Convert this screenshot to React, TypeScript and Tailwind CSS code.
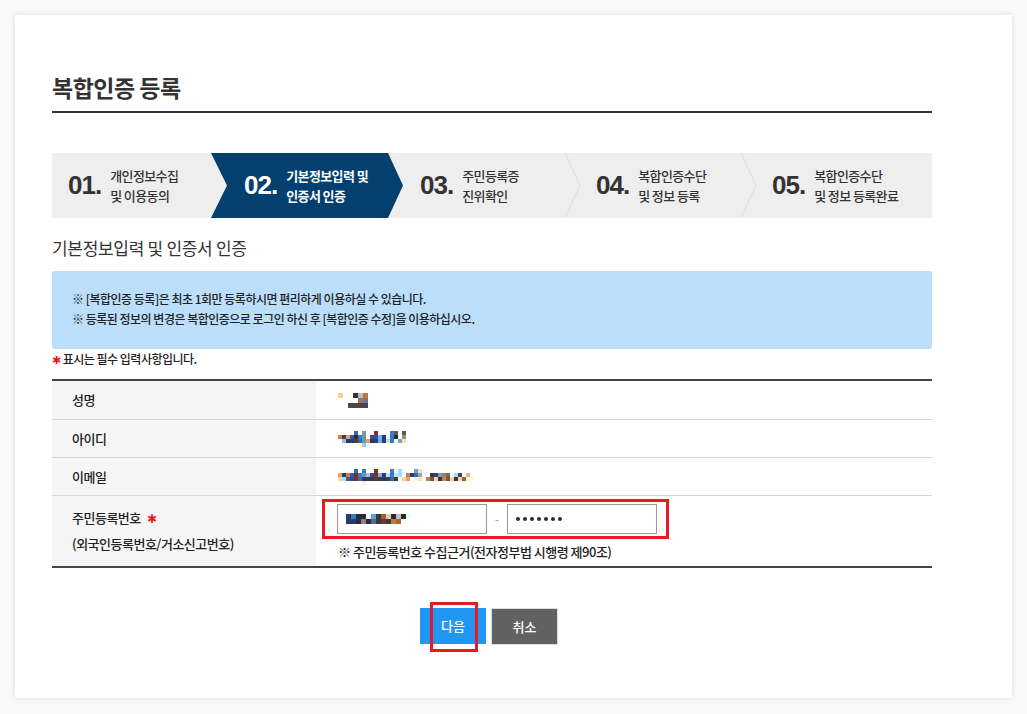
import type { ReactNode } from 'react';

const FONT = '"Noto Sans CJK KR", "Noto Sans", sans-serif';

const steps = [
  { no: '01.', l1: '개인정보수집', l2: '및 이용동의' },
  { no: '02.', l1: '기본정보입력 및', l2: '인증서 인증' },
  { no: '03.', l1: '주민등록증', l2: '진위확인' },
  { no: '04.', l1: '복합인증수단', l2: '및 정보 등록' },
  { no: '05.', l1: '복합인증수단', l2: '및 정보 등록완료' },
];

// pixelated (masked) values
function Mosaic({ cells, size = 5 }: { cells: string[][]; size?: number }) {
  const w = Math.max(...cells.map((r) => r.length)) * size;
  const h = cells.length * size;
  return (
    <svg width={w} height={h} className="block">
      {cells.map((row, y) =>
        row.map((c, x) =>
          c ? <rect key={`${x}-${y}`} x={x * size} y={y * size} width={size} height={size} fill={c} /> : null,
        ),
      )}
    </svg>
  );
}

const nameCells = [
  ['#ffd08a', '', '', '#333', '#bbb', '#c07a30'],
  ['', '', '', '', '#8a7a70', '#6a7a8a'],
  ['', '', '#4a4a4a', '#4a4a4a', '#6a3a30', '#3a4a6a'],
];
const idCells = [
  ['', '', '', '', '#3a6aaa', '', '#7a9a9a', '', '', '#7a3030', '', '', '', '#3a7ac0', '#5a5a5a', '', '#5a5a5a'],
  ['#c08050', '#6a3040', '#e0a070', '#3a5aa0', '#2a2a3a', '#3a7ac0', '#6a9a9a', '', '#3a4a8a', '#3a4a8a', '#7ab0e0', '#2a3a7a', '', '#3a7ac0', '#2a2a2a', '', '#a09070'],
  ['', '#8ac0f0', '#2a3a6a', '#2a3a6a', '#5a3a3a', '#2a6ab0', '#6a9ab0', '#e0a070', '#2a3a5a', '#2a3a7a', '#6ab0e0', '#2a3a7a', '#c0e0f0', '#3a7ac0', '', '#6ab0b0', '#ffe0b0'],
  ['', '', '', '', '', '#fffbd0', '#8ad0f0', '', '', '', '', '', '', '', '', '', ''],
];
const mailCells = [
  ['', '', '', '', '#3a6aaa', '', '#3a7ac0', '', '', '#7a3030', '', '', '', '#3a7ac0', '', '#a0e0ff', '', '', '', '#7a9ac0', '#ffe0c0', '', '', '', '', '', '', '', '', '', '', '', '', ''],
  ['#e0a070', '#2a3a6a', '#c08050', '#3a5aa0', '#7a3030', '#3a7ac0', '#6a9ab0', '#a0c0e0', '#3a4a8a', '#7a3030', '#7ab0e0', '#2a3a7a', '#c0e0f0', '#3a7ac0', '#c0e0ff', '#a0e0ff', '', '#c08050', '#2a3a6a', '#3a6aaa', '#8ab0a0', '', '', '#3a3a3a', '#3a3a8a', '#7aa0b0', '#a08060', '#6a6a6a', '', '#a0e0ff', '#3a4a6a', '', '#c0c080', ''],
  ['#ffd0a0', '#a0e0ff', '#3a5aa0', '#3a4a8a', '#7a3030', '#3a6aaa', '#2a3a5a', '#3a3a3a', '#2a3a5a', '#5a3a3a', '#3a3a3a', '#2a3a5a', '#3a3a5a', '#3a6aaa', '#3a3a3a', '#fffbd0', '#ffd0a0', '#e0a070', '#fff', '#f0f0f0', '#ffe0c0', '', '#c08050', '#6a5a4a', '#ffd0a0', '#3a3a3a', '#c08050', '#7a5a3a', '#ffd0a0', '#3a3a3a', '#ffd0a0', '#a06040', '#fffbd0', '#fffbd0'],
  ['', '', '', '', '', '', '#ffefd0', '', '', '', '', '', '', '', '', '', '', '', '', '', '', '', '', '', '', '', '', '', '', '', '', '', '', ''],
];
const rrnCells = [
  ['#2a3a6a', '#3a7ac0', '#2a2a3a', '#2a2a3a', '', '#5aa0e0', '#3a3a3a', '#a06030', '#e0d0b0', '#2a2a2a', '#c0c0c0', '#2a2a2a', '#f0fff8'],
  ['#2a3a6a', '#2a3a6a', '#2a2a3a', '#9a7a8a', '#2a2a3a', '#5a6a7a', '#3a3a3a', '#6a3a3a', '#3a3a3a', '#c07a40', '#a06a30', '', ''],
];

function Row({ label, children, tall }: { label: ReactNode; children: ReactNode; tall?: boolean }) {
  return (
    <div className={`flex border-t border-[#d5d5d5] first:border-t-0 ${tall ? 'min-h-[71px]' : 'h-[38px]'}`}>
      <div className="flex w-[264px] shrink-0 items-center bg-[#f5f5f5] pl-5 text-[13px] font-medium tracking-[-0.5px] text-[#222]">
        {label}
      </div>
      <div className="flex flex-1 items-center pl-[22px]">{children}</div>
    </div>
  );
}

export default function App() {
  return (
    <div className="min-h-[714px] bg-[#fafafa] p-[15px]" style={{ fontFamily: FONT }}>
      <div className="h-[683px] w-[997px] bg-white pl-[37px] pt-[57px] shadow-[0_0_6px_rgba(0,0,0,0.12)]">
        <div className="w-[880px]">
          <h1 className="text-[23px] font-bold leading-[30px] tracking-[-0.5px] text-[#333]">복합인증 등록</h1>
          <div className="mt-[9px] h-[2px] bg-[#333]" />

          {/* steps */}
          <div className="mt-[40px] flex h-[65px] bg-[#eeeeee]">
            {steps.map((s, i) => {
              const active = i === 1;
              return (
                <div key={s.no} className="relative flex w-[176px] items-center pl-4">
                  {active && (
                    <svg className="absolute top-0 -left-[17px] h-[65px] w-[193px]" viewBox="0 0 193 65">
                      <polygon points="0,0 177,0 192,32.5 177,65 0,65 16,32.5" fill="#03406f" />
                    </svg>
                  )}
                  {(i === 3 || i === 4) && (
                    <svg className="absolute top-0 -left-[16px] h-[65px] w-[17px]" viewBox="0 0 17 65">
                      <polyline points="1,0 16,32.5 1,65" fill="none" stroke="#dcdcdc" strokeWidth="1" />
                    </svg>
                  )}
                  <span
                    className={`relative text-[26px] font-bold tracking-[-1px] ${active ? 'text-white' : 'text-[#333]'}`}
                    style={{ fontFamily: '"Liberation Sans", Arial, sans-serif' }}
                  >
                    {s.no}
                  </span>
                  <div
                    className={`relative ml-[9px] text-[13px] leading-[20px] tracking-[-0.6px] ${
                      active ? 'font-bold text-white' : 'font-medium text-[#333]'
                    }`}
                  >
                    <div>{s.l1}</div>
                    <div>{s.l2}</div>
                  </div>
                </div>
              );
            })}
          </div>

          <h2 className="mt-[17px] text-[17px] leading-[26px] tracking-[-0.3px] text-[#333]">기본정보입력 및 인증서 인증</h2>

          <div className="mt-[10px] h-[78px] rounded-[2px] bg-[#bbdefb] pl-5 pt-[18px] text-[12px] font-medium leading-[20px] tracking-[-0.5px] text-[#222]">
            <p>※ [복합인증 등록]은 최초 1회만 등록하시면 편리하게 이용하실 수 있습니다.</p>
            <p>※ 등록된 정보의 변경은 복합인증으로 로그인 하신 후 [복합인증 수정]을 이용하십시오.</p>
          </div>

          <p className="mt-[1px] text-[12px] font-medium leading-[18px] tracking-[-0.5px] text-[#222]">
            <span className="text-[11px] text-[#e31b23]">✱</span> 표시는 필수 입력사항입니다.
          </p>

          <div className="mt-[11px] border-y-[2px] border-[#444]">
            <Row label="성명">
              <Mosaic cells={nameCells} size={5} />
            </Row>
            <Row label="아이디">
              <Mosaic cells={idCells} size={4} />
            </Row>
            <Row label="이메일">
              <Mosaic cells={mailCells} size={4} />
            </Row>
            <Row
              tall
              label={
                <div className="leading-[26px]">
                  <div>
                    주민등록번호<span className="ml-[6px] text-[12px] text-[#e31b23]">✱</span>
                  </div>
                  <div>(외국인등록번호/거소신고번호)</div>
                </div>
              }
            >
              <div className="pt-[1px] pb-[3px]">
                <div className="-ml-[16px] flex h-[40px] w-[347px] items-center border-[3px] border-[#e31b23] pl-[12px]">
                  <div className="flex h-[30px] w-[150px] items-center border border-[#999] pl-2">
                    <Mosaic cells={rrnCells} size={5} />
                  </div>
                  <span className="mx-[8px] text-[12px] text-[#999]">-</span>
                  <div className="flex h-[30px] w-[150px] items-center border border-[#999] pl-[8px] text-[#333]">
                    <div className="flex gap-[3px]">
                      {Array.from({ length: 7 }).map((_, k) => (
                        <span key={k} className="h-[4px] w-[4px] rounded-full bg-[#2a2a3a]" />
                      ))}
                    </div>
                  </div>
                </div>
                <p className="mt-[3px] text-[13px] font-medium leading-[20px] tracking-[-0.5px] text-[#222]">
                  ※ 주민등록번호 수집근거(전자정부법 시행령 제90조)
                </p>
              </div>
            </Row>
          </div>

          <div className="mt-[40px] flex justify-center gap-[5px] pr-[6px]">
            <div className="relative">
              <button className="h-[36px] w-[66px] bg-[#2196f3] text-[13px] font-medium text-white">다음</button>
              <div className="pointer-events-none absolute -top-[6px] left-[10px] h-[50px] w-[48px] border-[3px] border-[#e31b23]" />
            </div>
            <button className="h-[37px] w-[67px] border border-[#ddd] bg-[#616161] text-[13px] font-medium text-white">취소</button>
          </div>
        </div>
      </div>
    </div>
  );
}
